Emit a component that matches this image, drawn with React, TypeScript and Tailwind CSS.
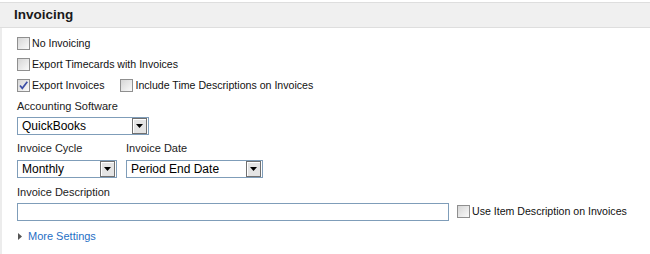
import { ReactNode } from 'react';

function CheckBox({ checked = false }: { checked?: boolean }) {
    return (
        <span className="relative inline-flex h-[13px] w-[13px] shrink-0 border border-[#8f8f8f] bg-gradient-to-br from-[#d6d6d6] to-[#fafafa]">
            {checked && (
                <svg viewBox="0 0 11 11" className="absolute inset-0 h-[11px] w-[11px]">
                    <path d="M2 5.5 L4.3 8.3 L9.3 1.8" fill="none" stroke="#3c4ea6" strokeWidth="1.7" />
                </svg>
            )}
        </span>
    );
}

function CheckRow({ label, checked }: { label: string; checked?: boolean }) {
    return (
        <label className="flex items-center gap-[2px]">
            <CheckBox checked={checked} />
            <span className="text-[10.6px] text-[#111]">{label}</span>
        </label>
    );
}

function DropDown({ value, width }: { value: string; width: string }) {
    return (
        <div className={`flex h-[18px] items-center border border-[#7f9db9] bg-white pl-[4px] pr-px ${width}`}>
            <span className="flex-1 text-[12px] leading-none text-black">{value}</span>
            <span className="flex h-[16px] w-[15px] items-center justify-center border border-[#707070] bg-[#e4e4e4] shadow-[inset_1px_1px_0_#fff]">
                <svg viewBox="0 0 7 4" className="h-[4px] w-[7px]">
                    <polygon points="0,0 7,0 3.5,4" fill="#000" />
                </svg>
            </span>
        </div>
    );
}

function FieldLabel({ children, className = '' }: { children: ReactNode; className?: string }) {
    return <div className={`h-[14px] text-[11px] leading-[14px] text-[#222] ${className}`}>{children}</div>;
}

export default function App() {
    return (
        <div className="h-[254px] w-[650px] overflow-hidden bg-white pt-[2px] font-['Liberation_Sans',Arial,sans-serif]">
            {/* Section header */}
            <div className="flex h-[26px] items-center border-y border-[#dedede] bg-[#f0f0f0] pl-[14px]">
                <h2 className="text-[13.5px] font-bold text-[#1a1a1a]">Invoicing</h2>
            </div>

            <div className="h-[230px] border-l-2 border-[#ececec] pl-[15px] pt-[5px]">
                <div className="flex h-[21px] items-center">
                    <CheckRow label="No Invoicing" />
                </div>
                <div className="flex h-[21px] items-center">
                    <CheckRow label="Export Timecards with Invoices" />
                </div>
                <div className="flex h-[21px] items-center gap-[16px]">
                    <CheckRow label="Export Invoices" checked />
                    <CheckRow label="Include Time Descriptions on Invoices" />
                </div>

                <FieldLabel className="mt-[3px]">Accounting Software</FieldLabel>
                <div className="mt-[4px]">
                    <DropDown value="QuickBooks" width="w-[132px]" />
                </div>

                <div className="mt-[6px] flex gap-[9px]">
                    <div className="w-[100px]">
                        <FieldLabel>Invoice Cycle</FieldLabel>
                        <div className="mt-[5px]">
                            <DropDown value="Monthly" width="w-[100px]" />
                        </div>
                    </div>
                    <div className="w-[137px]">
                        <FieldLabel>Invoice Date</FieldLabel>
                        <div className="mt-[5px]">
                            <DropDown value="Period End Date" width="w-[137px]" />
                        </div>
                    </div>
                </div>

                <FieldLabel className="mt-[7px]">Invoice Description</FieldLabel>
                <div className="mt-[4px] flex items-center gap-[8px]">
                    <input className="h-[18px] w-[432px] border border-[#7f9db9] bg-white px-1 text-[12px] outline-none" />
                    <CheckRow label="Use Item Description on Invoices" />
                </div>

                <div className="mt-[8px] flex h-[14px] items-center gap-[6px] pl-px">
                    <svg viewBox="0 0 4 7" className="h-[7px] w-[4px]">
                        <polygon points="0,0 4,3.5 0,7" fill="#555" />
                    </svg>
                    <a href="#" className="text-[11px] text-[#1f6fc5]">More Settings</a>
                </div>
            </div>
        </div>
    );
}
